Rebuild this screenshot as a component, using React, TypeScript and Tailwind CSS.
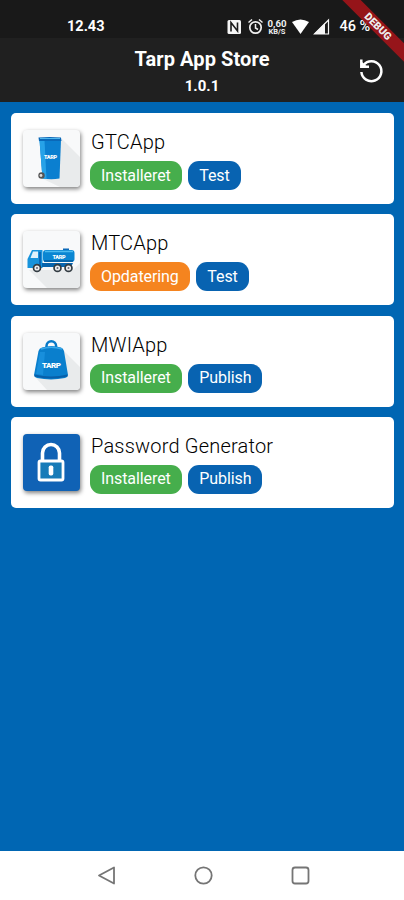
import type { ReactNode } from 'react';
import { clsx } from 'clsx';

type StoreApp = {
  name: string;
  status: 'Installeret' | 'Opdatering';
  channel: 'Test' | 'Publish';
  icon: ReactNode;
  iconClass: string;
};

function BinIcon() {
  return (
    <svg viewBox="0 0 57 57" className="size-full">
      <path d="M39 9l18 18v30H37L18 48z" fill="#e9ebec" />
      <path d="M16.500 10h21.500l-1.500 38.500q-8 1.500-17 0z" fill="#0b7fd0" />
      <path d="M16.500 10h5l2 39-4-.5z" fill="#27a2e8" />
      <path d="M15.500 7.500q11-1 22.500 0l.5 3.500H16z" fill="#0a68b8" />
      <path d="M17 8.500h20" stroke="#50b8ee" strokeWidth="1" />
      <circle cx="18.500" cy="45.500" r="3.200" fill="#555" />
      <circle cx="18" cy="45.500" r="1.400" fill="#ddd" />
      <text x="27.500" y="29" textAnchor="middle" fill="#fff" fontSize="5.500" fontWeight="900" textLength="13" fontFamily="Roboto, sans-serif">
        TARP
      </text>
    </svg>
  );
}

function TruckIcon() {
  return (
    <svg viewBox="0 0 57 57" className="size-full">
      <path d="M6 39h44l7-7v25H24z" fill="#e9ebec" />
      <path d="M40 17.500h6v3h-6z" fill="#0a68b8" />
      <rect x="20" y="19" width="31.500" height="12" rx="3" fill="#0a86d2" />
      <path d="M22 20.500h28" stroke="#4dbcf0" strokeWidth="1.500" />
      <path d="M9 19h10.500v18H4.500V28z" fill="#1793dc" />
      <path d="M10 20.500h5V27H7.500z" fill="#dff1fb" />
      <path d="M16 21h2v15h-2z" fill="#0a68b8" />
      <path d="M19 32h31l-2 4H19z" fill="#0864ad" />
      <path d="M21 30h29" stroke="#075b9f" strokeWidth="1.500" />
      {[14, 34.5, 45.5].map((x) => (
        <g key={x}>
          <circle cx={x} cy="37" r="4.300" fill="#333c43" />
          <circle cx={x} cy="37" r="2.600" fill="#eee" />
          <circle cx={x} cy="37" r="1" fill="#667" />
        </g>
      ))}
      <text x="36" y="27.500" textAnchor="middle" fill="#fff" fontSize="5.500" fontWeight="900" textLength="13" fontFamily="Roboto, sans-serif">
        TARP
      </text>
    </svg>
  );
}

function WeightIcon() {
  return (
    <svg viewBox="0 0 57 57" className="size-full">
      <path d="M40 17l17 17v23H24L12 44z" fill="#e9ebec" />
      <path d="M23.500 16v-3a4.800 4.800 0 0 1 9.600 0v3" fill="none" stroke="#0879c7" strokeWidth="2.500" />
      <path d="M19 14.500q9.500-3 19 0 2.200.5 3 3.500l4 24q-.5 2.500-3 3-14 2.800-28 0-2.500-.5-3-3L15.500 18q.8-3 3.500-3.500z" fill="#0a7fcd" />
      <path d="M18 16q10-3.500 21 0" fill="none" stroke="#38a9ea" strokeWidth="1.500" />
      <path d="M11.500 41.500q16.500 4 33 0v2q-16.500 4-33 0z" fill="#075fa9" />
      <path d="M17 19l-4 22 7 1 2-23z" fill="#188fdc" />
      <text x="28.500" y="34.500" textAnchor="middle" fill="#fff" fontSize="8" fontWeight="900" textLength="19" fontFamily="Roboto, sans-serif">
        TARP
      </text>
    </svg>
  );
}

function LockIcon() {
  return (
    <svg viewBox="0 0 57 57" className="size-full">
      <path d="M19.500 27v-8a8.500 8.500 0 0 1 17 0v8" fill="none" stroke="#fff" strokeWidth="3.600" />
      <rect x="16" y="27" width="24" height="19" rx="1.500" fill="#177bb8" stroke="#fff" strokeWidth="2.800" />
      <rect x="25.700" y="31.500" width="4.600" height="10" rx="1.800" fill="#fff" />
    </svg>
  );
}

const apps: StoreApp[] = [
  { name: 'GTCApp', status: 'Installeret', channel: 'Test', icon: <BinIcon />, iconClass: 'bg-[#f8f9fa]' },
  { name: 'MTCApp', status: 'Opdatering', channel: 'Test', icon: <TruckIcon />, iconClass: 'bg-[#f8f9fa]' },
  { name: 'MWIApp', status: 'Installeret', channel: 'Publish', icon: <WeightIcon />, iconClass: 'bg-[#f8f9fa]' },
  { name: 'Password Generator', status: 'Installeret', channel: 'Publish', icon: <LockIcon />, iconClass: 'bg-[#1062b5]' },
];

function Chip({ label, className }: { label: string; className: string }) {
  return (
    <span className={clsx('flex h-[29px] items-center rounded-[11px] px-[11px] text-base tracking-[-0.08px] text-white', className)}>
      {label}
    </span>
  );
}

function AppCard({ app }: { app: StoreApp }) {
  return (
    <li className="flex h-[91px] items-start rounded-[5px] bg-white pt-[17px] pl-[12.500px]">
      <div className={clsx('size-[57px] shrink-0 overflow-hidden rounded-[4px] shadow-[1px_2px_4px_rgba(0,0,0,0.5)]', app.iconClass)}>
        {app.icon}
      </div>
      <div className="ml-[10px]">
        <h2 className="h-[31px] pl-px text-[20px] leading-[25px] font-light tracking-[0.2px] text-black">{app.name}</h2>
        <div className="flex gap-[6.500px]">
          <Chip label={app.status} className={app.status === 'Opdatering' ? 'bg-[#f5841f]' : 'bg-[#46ae4c]'} />
          <Chip label={app.channel} className="bg-[#0863b1]" />
        </div>
      </div>
    </li>
  );
}

function StatusIcons() {
  return (
    <svg width="105" height="18" viewBox="226 18 105 18" fill="none">
      <rect x="227.500" y="20" width="13.500" height="14" rx="1.500" fill="#f5f5f5" />
      <path d="M231 31.500v-9l6.500 8.500v-8.500" stroke="#191919" strokeWidth="1.600" />
      <circle cx="255.500" cy="27.500" r="5.700" stroke="#f0f0f0" strokeWidth="1.700" />
      <path d="M255.500 24v4l2.500 1.500M248.500 22.500l3.500-3M262.500 22.500l-3.500-3" stroke="#f0f0f0" strokeWidth="1.500" />
      <text x="267.500" y="26.500" fill="#f0f0f0" fontSize="9.500" fontWeight="700" textLength="19" lengthAdjust="spacingAndGlyphs" fontFamily="Roboto, sans-serif">
        0,60
      </text>
      <text x="268.500" y="34" fill="#f0f0f0" fontSize="7" fontWeight="700" textLength="17" lengthAdjust="spacingAndGlyphs" fontFamily="Roboto, sans-serif">
        KB/S
      </text>
      <path d="M292 22q8.500-5 17 0l-8.500 12z" fill="#fff" />
      <path d="M328.500 20v14h-14z" stroke="#f5f5f5" strokeWidth="1.200" />
      <path d="M325 23v11h-11z" fill="#f5f5f5" />
    </svg>
  );
}

function Header() {
  return (
    <header className="h-[102px] bg-[#202020] text-white">
      <div className="flex h-[38px] items-start bg-[#191919] pt-[18px] pl-[67px] text-[14.500px] leading-[18px] font-bold">
        <span className="w-[159px]">12.43</span>
        <StatusIcons />
        <span className="ml-[8.500px] font-medium whitespace-nowrap">46 %</span>
      </div>
      <div className="grid h-16 grid-cols-[1fr_auto_1fr] items-start">
        <div className="col-start-2 pt-[9px] text-center">
          <h1 className="text-[20px] leading-[25px] font-bold tracking-[0.1px]">Tarp App Store</h1>
          <p className="mt-[3px] text-[15px] leading-[22px] font-bold">1.0.1</p>
        </div>
        <button type="button" aria-label="Opdater" className="mt-[18px] mr-[18px] justify-self-end">
          <svg width="30" height="30" viewBox="0 0 30 30" fill="none" stroke="#fff" strokeWidth="2.500">
            <path d="M7.500 9A10 10 0 1 1 5.400 16" />
            <path d="M5.300 3.500v7.200H13" />
            <path d="M5 5l6.500 6H5z" fill="#fff" stroke="none" />
          </svg>
        </button>
      </div>
    </header>
  );
}

export default function App() {
  return (
    <div className="relative flex h-[900px] w-[404px] flex-col overflow-hidden bg-[#0066b3] font-[Roboto,sans-serif]">
      <Header />
      <main className="flex-1 px-[10.500px] pt-[11px]">
        <ul className="flex flex-col gap-[10.300px]">
          {apps.map((app) => (
            <AppCard key={app.name} app={app} />
          ))}
        </ul>
      </main>
      <nav className="flex h-[49px] justify-center gap-[71.500px] bg-white pt-3 pl-[3px]">
        <svg width="25" height="25" fill="none" stroke="#757575" strokeWidth="1.800" strokeLinejoin="round">
          <path d="M4 12.500L19 4.500v16z" />
        </svg>
        <svg width="25" height="25" fill="none" stroke="#757575" strokeWidth="1.800">
          <circle cx="12.500" cy="12.500" r="8.200" />
        </svg>
        <svg width="25" height="25" fill="none" stroke="#757575" strokeWidth="1.800">
          <rect x="4.500" y="4.500" width="16" height="16" rx="2.500" />
        </svg>
      </nav>
      <div className="absolute top-[20px] left-[317.500px] flex h-[13px] w-[120px] rotate-45 items-center justify-center bg-[#a31419]/90 text-[10.500px] font-black text-[#eee]">
        DEBUG
      </div>
    </div>
  );
}
